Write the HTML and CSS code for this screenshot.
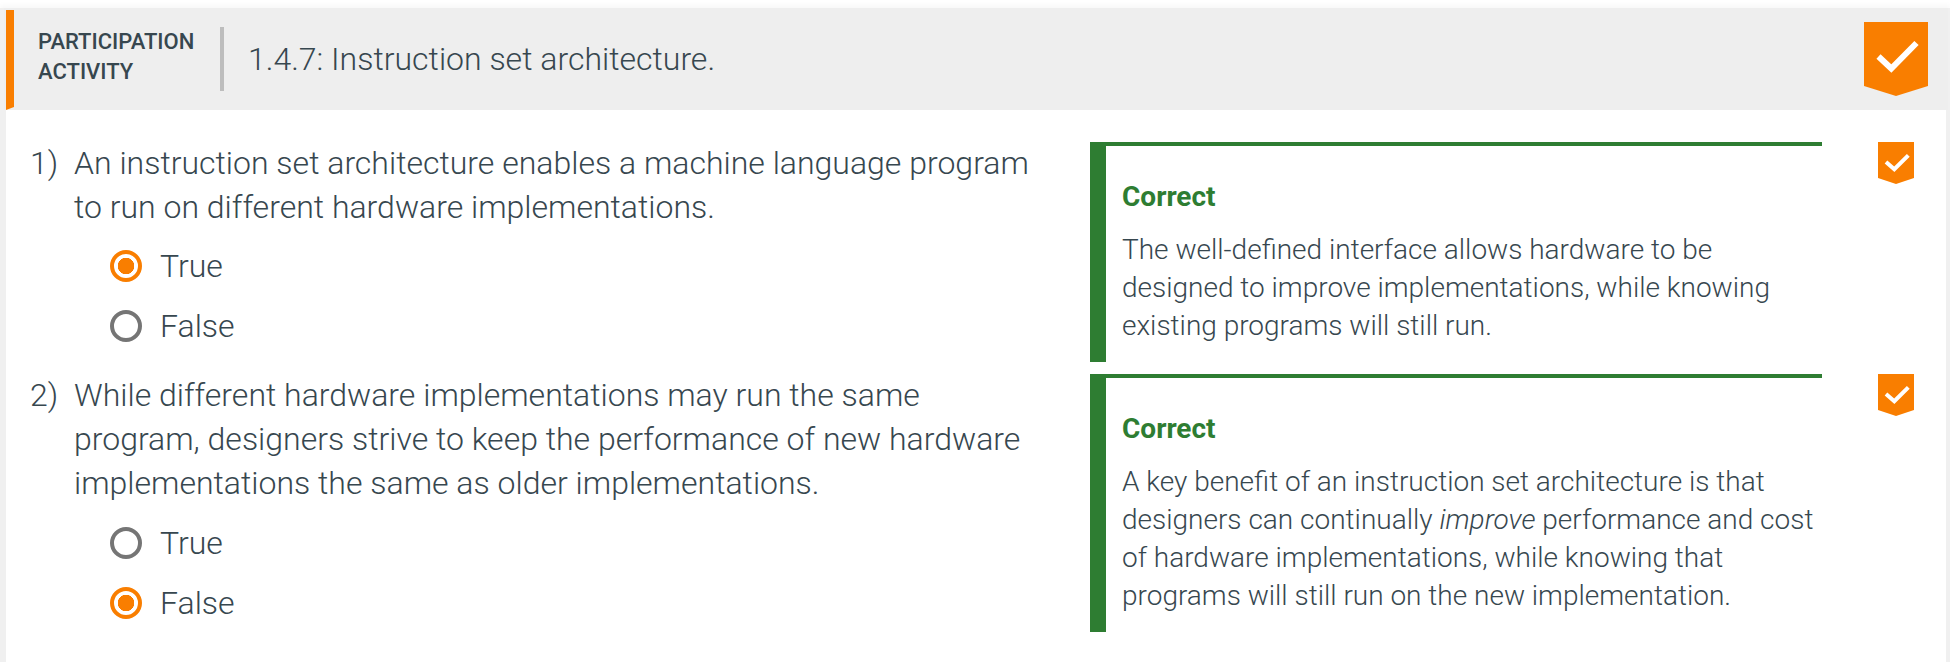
FILE: index.html
```html
<!DOCTYPE html>
<html lang="en">
<head>
    <meta charset="UTF-8">
    <meta name="viewport" content="width=device-width, initial-scale=1.0">
    <title>Participation Activity 1.4.7</title>
    <link rel="stylesheet" href="styles.css">
</head>
<body>
    <div class="activity">
        <header class="activity-header">
            <span class="activity-accent"></span>
            <div class="activity-label">PARTICIPATION<br>ACTIVITY</div>
            <h1 class="activity-title">1.4.7: Instruction set architecture.</h1>
            <svg class="badge-large" viewBox="0 0 64 74">
                <path class="badge-shape" d="M0 0H64V64L32 74L0 64Z"/>
                <path class="badge-check" d="M14.5 34.5L27.3 46.5L52.5 21"/>
            </svg>
        </header>

        <section class="question question-first">
            <div class="question-main">
                <div class="question-text">
                    <span class="question-num">1)</span>
                    <p>An instruction set architecture enables a machine language program to run on different hardware implementations.</p>
                </div>
                <div class="choices">
                    <label class="choice"><span class="radio radio-on"></span>True</label>
                    <label class="choice"><span class="radio"></span>False</label>
                </div>
            </div>
            <div class="feedback">
                <h2>Correct</h2>
                <p>The well-defined interface allows hardware to be designed to improve implementations, while knowing existing programs will still run.</p>
            </div>
            <svg class="badge-small" viewBox="0 0 36 42">
                <path class="badge-shape" d="M0 0H36V36L18 42L0 36Z"/>
                <path class="badge-check" d="M8 20L16.3 27.2L30.3 13.3"/>
            </svg>
        </section>

        <section class="question question-second">
            <div class="question-main">
                <div class="question-text">
                    <span class="question-num">2)</span>
                    <p>While different hardware implementations may run the same program, designers strive to keep the performance of new hardware implementations the same as older implementations.</p>
                </div>
                <div class="choices">
                    <label class="choice"><span class="radio"></span>True</label>
                    <label class="choice"><span class="radio radio-on"></span>False</label>
                </div>
            </div>
            <div class="feedback">
                <h2>Correct</h2>
                <p>A key benefit of an instruction set architecture is that designers can continually <em>improve</em> performance and cost of hardware implementations, while knowing that programs will still run on the new implementation.</p>
            </div>
            <svg class="badge-small" viewBox="0 0 36 42">
                <path class="badge-shape" d="M0 0H36V36L18 42L0 36Z"/>
                <path class="badge-check" d="M8 20L16.3 27.2L30.3 13.3"/>
            </svg>
        </section>
    </div>
</body>
</html>
```

FILE: styles.css
```css
* {
    margin: 0;
    padding: 0;
    box-sizing: border-box;
}

body {
    background: #fff;
    color: #37474f;
    font-family: Roboto, "Liberation Sans", sans-serif;
    font-weight: 300;
    height: 662px;
    overflow: hidden;
}

.activity {
    height: 662px;
    margin-top: 8px;
    padding: 0 4px 0 6px;
    box-shadow: 0 -3px 5px rgba(0, 0, 0, 0.03), inset 6px 0 0 #f0f0f0, inset -4px 0 0 #f0f0f0;
}

.activity-header {
    display: flex;
    align-items: center;
    height: 102px;
    margin: 0 -2px;
    padding-left: 2px;
    background: #eee;
}

.activity-accent {
    align-self: flex-start;
    width: 8px;
    height: 100px;
    margin: 2px 24px 0 0;
    background: #f97e00;
    clip-path: polygon(0 0, 100% 0, 100% 97%, 0 100%);
}

.activity-label {
    width: 182px;
    margin-top: -4px;
    font-size: 22px;
    line-height: 30px;
    font-weight: 500;
}

.activity-title {
    display: flex;
    align-items: center;
    height: 64px;
    padding-left: 24px;
    border-left: 4px solid #bdbdbd;
    font-size: 32px;
    font-weight: 300;
}

.badge-large {
    width: 64px;
    height: 74px;
    margin: 0 20px 0 auto;
}

.badge-shape {
    fill: #f97e00;
}

.badge-check {
    fill: none;
    stroke: #fff;
    stroke-width: 6;
}

.badge-small .badge-check {
    stroke-width: 4;
}

.question {
    display: flex;
    align-items: flex-start;
    height: 260px;
}

.question-first {
    height: 264px;
    padding-top: 32px;
}

.question-main {
    width: 1084px;
    margin-top: -1px;
    padding-left: 24px;
}

.question-text {
    display: flex;
    font-size: 32px;
    line-height: 44px;
}

.question-num {
    width: 44px;
    flex-shrink: 0;
}

.question-text p {
    width: 970px;
}

.choices {
    margin-top: 7px;
    padding-left: 80px;
}

.question-second .choices {
    margin-top: 8px;
}

.choice {
    display: flex;
    align-items: center;
    gap: 18px;
    height: 60px;
    font-size: 32px;
}

.radio {
    width: 32px;
    height: 32px;
    border: 4px solid #757575;
    border-radius: 50%;
    background: #fff;
}

.radio-on {
    border-color: #f97e00;
    background: radial-gradient(circle, #f97e00 0 8px, #fff 8.5px);
}

.feedback {
    width: 732px;
    height: 220px;
    padding: 35px 4px 0 16px;
    border-top: 4px solid #2e7d32;
    border-left: 16px solid #2e7d32;
}

.question-second .feedback {
    height: 258px;
}

.feedback h2 {
    margin-bottom: 18px;
    color: #2e7d32;
    font-size: 28px;
    line-height: 32px;
    font-weight: 700;
}

.feedback p {
    font-size: 28px;
    line-height: 38px;
}

.badge-small {
    width: 36px;
    height: 42px;
    margin-left: 56px;
}
```
